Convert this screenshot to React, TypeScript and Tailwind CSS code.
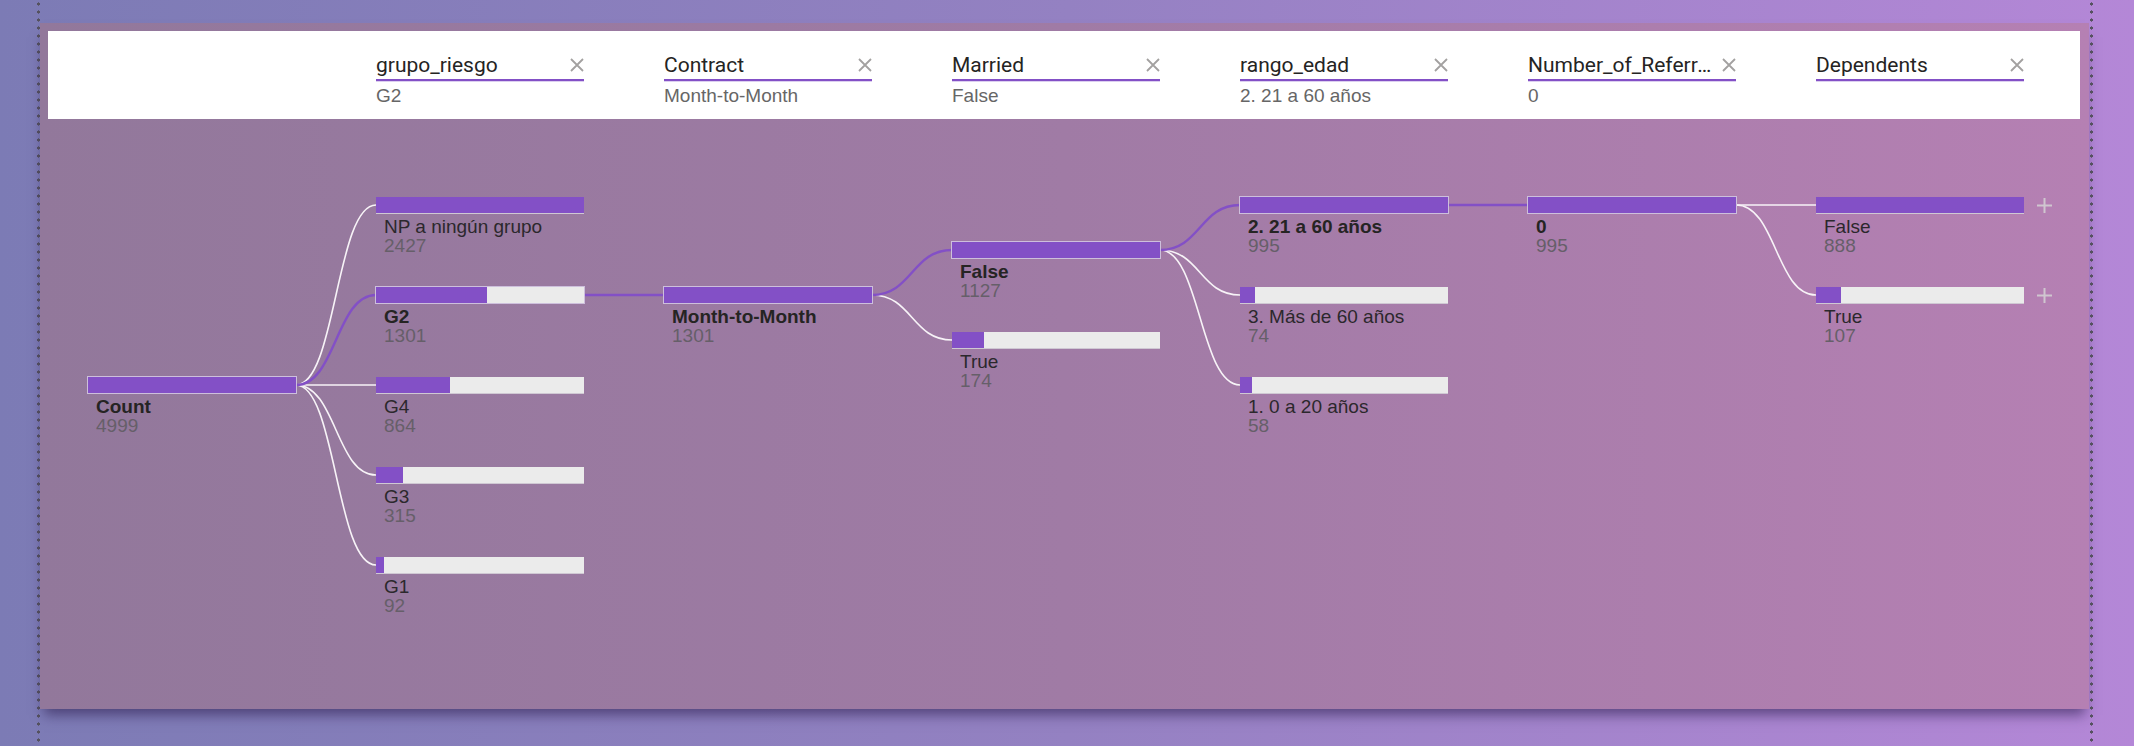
const PURPLE = "#8350c6";

type TreeNode = { label: string; value: number; selected?: boolean };
type TreeCol = { top: number; nodes: TreeNode[]; plus?: boolean };

const filters = [
  { title: "grupo_riesgo", value: "G2" },
  { title: "Contract", value: "Month-to-Month" },
  { title: "Married", value: "False" },
  { title: "rango_edad", value: "2. 21 a 60 años" },
  { title: "Number_of_Referrals", value: "0" },
  { title: "Dependents", value: "" },
];

const cols: TreeCol[] = [
  { top: 258, nodes: [{ label: "Count", value: 4999, selected: true }] },
  {
    top: 78,
    nodes: [
      { label: "NP a ningún grupo", value: 2427 },
      { label: "G2", value: 1301, selected: true },
      { label: "G4", value: 864 },
      { label: "G3", value: 315 },
      { label: "G1", value: 92 },
    ],
  },
  { top: 168, nodes: [{ label: "Month-to-Month", value: 1301, selected: true }] },
  {
    top: 123,
    nodes: [
      { label: "False", value: 1127, selected: true },
      { label: "True", value: 174 },
    ],
  },
  {
    top: 78,
    nodes: [
      { label: "2. 21 a 60 años", value: 995, selected: true },
      { label: "3. Más de 60 años", value: 74 },
      { label: "1. 0 a 20 años", value: 58 },
    ],
  },
  { top: 78, nodes: [{ label: "0", value: 995, selected: true }] },
  {
    top: 78,
    plus: true,
    nodes: [
      { label: "False", value: 888 },
      { label: "True", value: 107 },
    ],
  },
];

const BAR_W = 208;
const STEP = 288;
const ROW = 90;
const colX = (i: number) => 40 + STEP * i;

function XIcon() {
  return (
    <svg width="14" height="14" viewBox="0 0 14 14" className="shrink-0">
      <path d="M1 1 L13 13 M13 1 L1 13" stroke="#a3a1a0" strokeWidth="1.8" fill="none" />
    </svg>
  );
}

function PlusIcon() {
  return (
    <svg width="15" height="15" viewBox="0 0 15 15" className="shrink-0">
      <path d="M7.5 0 V15 M0 7.5 H15" stroke="#cfc6cf" strokeWidth="2" fill="none" />
    </svg>
  );
}

function Connectors() {
  const paths: { d: string; purple: boolean }[] = [];
  for (let i = 1; i < cols.length; i++) {
    const prev = cols[i - 1];
    const pIdx = prev.nodes.findIndex((n) => n.selected);
    const x0 = colX(i - 1) + BAR_W;
    const y0 = prev.top + pIdx * ROW + 8;
    const x1 = colX(i);
    const mx = (x0 + x1) / 2;
    cols[i].nodes.forEach((n, j) => {
      const y1 = cols[i].top + j * ROW + 8;
      paths.push({
        d: `M${x0} ${y0} C${mx} ${y0} ${mx} ${y1} ${x1} ${y1}`,
        purple: !!n.selected,
      });
    });
  }
  return (
    <svg className="pointer-events-none absolute inset-0 h-full w-full">
      {paths
        .filter((p) => !p.purple)
        .map((p, k) => (
          <path key={"w" + k} d={p.d} stroke="#f7f3f7" strokeWidth="1.6" fill="none" />
        ))}
      {paths
        .filter((p) => p.purple)
        .map((p, k) => (
          <path key={"p" + k} d={p.d} stroke={PURPLE} strokeWidth="2.4" fill="none" />
        ))}
    </svg>
  );
}

function Bar({ ratio, selected }: { ratio: number; selected?: boolean }) {
  return (
    <div
      className={`flex h-4 w-[208px] shrink-0 bg-[#ebebeb] ${
        selected ? "ring-1 ring-[#cdbfdc]" : "shadow-[0_1px_0_#cfc8d3]"
      }`}
    >
      <div className="h-full bg-[#8350c6]" style={{ width: `${ratio * 100}%` }} />
    </div>
  );
}

function Column({ col }: { col: TreeCol }) {
  const max = Math.max(...col.nodes.map((n) => n.value));
  return (
    <div className="flex flex-col" style={{ paddingTop: col.top }}>
      {col.nodes.map((n, i) => (
        <div key={i} className="h-[90px]">
          <div className="flex items-center gap-[13px]">
            <Bar ratio={n.value / max} selected={n.selected} />
            {col.plus && <PlusIcon />}
          </div>
          <div className="mt-1 pl-2 text-[19px] leading-[19px] whitespace-nowrap">
            <div className={n.selected ? "font-bold text-[#252423]" : "text-[#2b282c]"}>
              {n.label}
            </div>
            <div className="text-[#665f69]">{n.value}</div>
          </div>
        </div>
      ))}
    </div>
  );
}

export default function App() {
  return (
    <div
      className="flex h-[746px] w-[2134px] overflow-hidden bg-[linear-gradient(90deg,#7c7bb5_0%,#9481c2_50%,#b487d7_100%)]"
      style={{ fontFamily: '"Liberation Sans", Arial, sans-serif' }}
    >
      <div className="w-[37px] shrink-0" />
      <div className="w-[3px] shrink-0 bg-[radial-gradient(circle,#55525f_1.4px,transparent_1.8px)] bg-size-[3px_8px]" />
      <div className="mt-[23px] flex h-[686px] w-[2049px] shrink-0 flex-col pt-2 pr-[9px] pl-2 bg-[linear-gradient(90deg,#92789b_0%,#a07ba5_50%,#b580b3_100%)] shadow-[0_10px_12px_-4px_rgba(45,30,80,0.6)]">
        <div className="flex h-[88px] shrink-0 gap-[80px] bg-white pl-[328px]">
          {filters.map((f) => (
            <div key={f.title} className="w-[208px] pt-[22px]">
              <div className="flex h-6 items-center gap-1">
                <span
                  className="min-w-0 flex-1 truncate text-[21px] leading-6 text-[#252423]"
                  style={{ fontFamily: "Roboto, sans-serif" }}
                >
                  {f.title}
                </span>
                <XIcon />
              </div>
              <div className="mt-[2px] h-[2px] bg-[#8350c6]" />
              <div className="h-px bg-[#dccff0]" />
              <div className="mt-[3px] text-[19px] leading-[22px] text-[#666666]">{f.value}</div>
            </div>
          ))}
        </div>
        <div className="relative flex-1">
          <Connectors />
          <div className="relative flex gap-[80px] pl-10">
            {cols.map((c, i) => (
              <Column key={i} col={c} />
            ))}
          </div>
        </div>
      </div>
      <div className="ml-px w-[3px] shrink-0 bg-[radial-gradient(circle,#55525f_1.4px,transparent_1.8px)] bg-size-[3px_8px]" />
    </div>
  );
}
